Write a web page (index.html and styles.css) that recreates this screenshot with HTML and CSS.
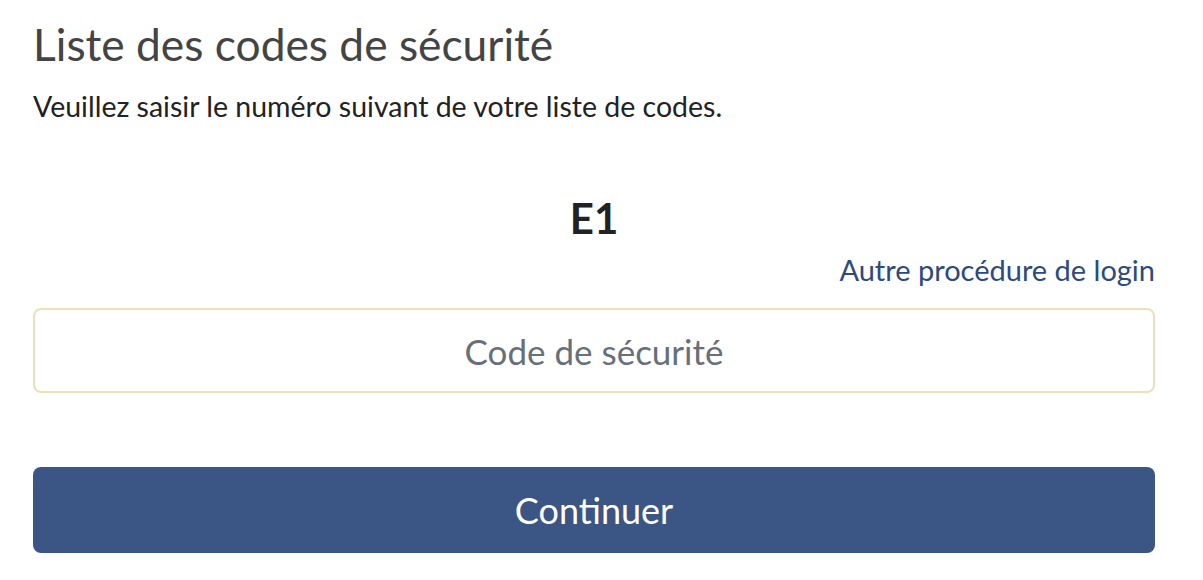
FILE: index.html
```html
<!DOCTYPE html>
<html lang="fr">
<head>
    <meta charset="UTF-8">
    <meta name="viewport" content="width=device-width, initial-scale=1.0">
    <title>Liste des codes de sécurité</title>
    <link rel="stylesheet" href="styles.css">
</head>
<body>
    <main class="login-card">
        <h1 class="login-title">Liste des codes de sécurité</h1>
        <p class="login-hint">Veuillez saisir le numéro suivant de votre liste de codes.</p>

        <div class="code-index">E1</div>

        <div class="alt-login">
            <a href="#">Autre procédure de login</a>
        </div>

        <form class="code-form">
            <input type="text" class="code-input" placeholder="Code de sécurité">
            <button type="submit" class="btn-continue">Continuer</button>
        </form>
    </main>
</body>
</html>
```

FILE: styles.css
```css
/* General Body Styling */
body {
    font-family: 'Lato', 'Liberation Sans', sans-serif;
    margin: 0;
    padding: 0;
    background-color: #ffffff;
    color: #222;
}

.login-card {
    width: 1122px;
    padding: 17px 0 0 33px;
}

.login-title {
    margin: 0;
    font-size: 44.3px;
    font-weight: normal;
    color: #444;
    line-height: 54px;
}

.login-hint {
    margin: 18px 0 0;
    font-size: 28.5px;
    line-height: 34px;
    color: #222;
}

/* Code index */
.code-index {
    margin-top: 70px;
    text-align: center;
    font-size: 42px;
    font-weight: bold;
    line-height: 50px;
    color: #222;
}

.alt-login {
    margin-top: 10px;
    text-align: right;
    font-size: 29px;
    line-height: 34px;
}

.alt-login a {
    color: #2c4a7e;
    text-decoration: none;
}

/* Form */
.code-form {
    margin-top: 21px;
    display: flex;
    flex-direction: column;
    gap: 74px;
}

.code-input {
    box-sizing: border-box;
    width: 100%;
    height: 85px;
    border: 2px solid #ede0b8;
    border-radius: 8px;
    font-family: 'Lato', sans-serif;
    font-size: 35px;
    text-align: center;
    color: #333;
}

.code-input::placeholder {
    color: #67707a;
}

.code-input:focus {
    outline: none;
}

.btn-continue {
    width: 100%;
    height: 86px;
    border: none;
    border-radius: 8px;
    background: #3b5584;
    color: #ffffff;
    font-family: 'Lato', sans-serif;
    font-size: 36px;
    cursor: pointer;
}
```
